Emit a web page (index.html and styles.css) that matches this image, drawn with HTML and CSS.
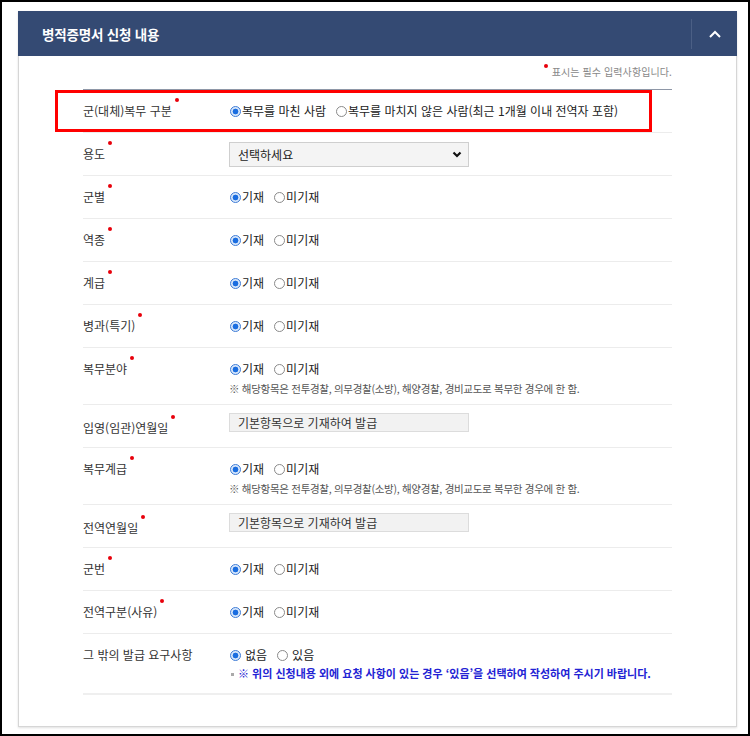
FILE: index.html
```html
<!DOCTYPE html>
<html lang="ko">
<head>
    <meta charset="UTF-8">
    <meta name="viewport" content="width=device-width, initial-scale=1.0">
    <title>병적증명서 신청 내용</title>
    <link rel="stylesheet" href="styles.css">
</head>
<body>
<div class="frame">
    <section class="panel">
        <div class="panel-head">
            <h2>병적증명서 신청 내용</h2>
            <button type="button" class="toggle" aria-label="접기">
                <svg width="12" height="8" viewBox="0 0 12 8"><polyline points="1,7 6,2 11,7" fill="none" stroke="#fff" stroke-width="2"/></svg>
            </button>
        </div>
        <div class="panel-body">
            <p class="req-note"><span class="req"></span>표시는 필수 입력사항입니다.</p>

            <div class="form-table">
                <div class="row highlight">
                    <div class="label">군(대체)복무 구분<span class="req"></span></div>
                    <div class="value">
                        <label class="opt"><input type="radio" name="svc" checked>복무를 마친 사람</label>
                        <label class="opt"><input type="radio" name="svc">복무를 마치지 않은 사람(최근 1개월 이내 전역자 포함)</label>
                    </div>
                </div>

                <div class="row">
                    <div class="label">용도<span class="req"></span></div>
                    <div class="value">
                        <div class="select-wrap">
                            <select class="select">
                                <option>선택하세요</option>
                            </select>
                            <svg class="select-arrow" width="10" height="7" viewBox="0 0 10 7"><polyline points="1.5,1.5 5,5 8.5,1.5" fill="none" stroke="#111" stroke-width="2.2"/></svg>
                        </div>
                    </div>
                </div>

                <div class="row">
                    <div class="label">군별<span class="req"></span></div>
                    <div class="value">
                        <label class="opt"><input type="radio" name="r1" checked>기재</label>
                        <label class="opt"><input type="radio" name="r1">미기재</label>
                    </div>
                </div>

                <div class="row">
                    <div class="label">역종<span class="req"></span></div>
                    <div class="value">
                        <label class="opt"><input type="radio" name="r2" checked>기재</label>
                        <label class="opt"><input type="radio" name="r2">미기재</label>
                    </div>
                </div>

                <div class="row">
                    <div class="label">계급<span class="req"></span></div>
                    <div class="value">
                        <label class="opt"><input type="radio" name="r3" checked>기재</label>
                        <label class="opt"><input type="radio" name="r3">미기재</label>
                    </div>
                </div>

                <div class="row">
                    <div class="label">병과(특기)<span class="req"></span></div>
                    <div class="value">
                        <label class="opt"><input type="radio" name="r4" checked>기재</label>
                        <label class="opt"><input type="radio" name="r4">미기재</label>
                    </div>
                </div>

                <div class="row with-note">
                    <div class="label">복무분야<span class="req"></span></div>
                    <div class="value">
                        <label class="opt"><input type="radio" name="r5" checked>기재</label>
                        <label class="opt"><input type="radio" name="r5">미기재</label>
                        <p class="help">※ 해당항목은 전투경찰, 의무경찰(소방), 해양경찰, 경비교도로 복무한 경우에 한 함.</p>
                    </div>
                </div>

                <div class="row with-input">
                    <div class="label">입영(임관)연월일<span class="req"></span></div>
                    <div class="value">
                        <input type="text" class="ro-input" value="기본항목으로 기재하여 발급" readonly>
                    </div>
                </div>

                <div class="row with-note">
                    <div class="label">복무계급<span class="req"></span></div>
                    <div class="value">
                        <label class="opt"><input type="radio" name="r6" checked>기재</label>
                        <label class="opt"><input type="radio" name="r6">미기재</label>
                        <p class="help">※ 해당항목은 전투경찰, 의무경찰(소방), 해양경찰, 경비교도로 복무한 경우에 한 함.</p>
                    </div>
                </div>

                <div class="row with-input">
                    <div class="label">전역연월일<span class="req"></span></div>
                    <div class="value">
                        <input type="text" class="ro-input" value="기본항목으로 기재하여 발급" readonly>
                    </div>
                </div>

                <div class="row">
                    <div class="label">군번<span class="req"></span></div>
                    <div class="value">
                        <label class="opt"><input type="radio" name="r7" checked>기재</label>
                        <label class="opt"><input type="radio" name="r7">미기재</label>
                    </div>
                </div>

                <div class="row">
                    <div class="label">전역구분(사유)<span class="req"></span></div>
                    <div class="value">
                        <label class="opt"><input type="radio" name="r8" checked>기재</label>
                        <label class="opt"><input type="radio" name="r8">미기재</label>
                    </div>
                </div>

                <div class="row last">
                    <div class="label">그 밖의 발급 요구사항</div>
                    <div class="value">
                        <label class="opt spaced"><input type="radio" name="etc" checked>없음</label>
                        <label class="opt spaced"><input type="radio" name="etc">있음</label>
                        <p class="help blue"><span class="bullet"></span>※ 위의 신청내용 외에 요청 사항이 있는 경우 ‘있음’을 선택하여 작성하여 주시기 바랍니다.</p>
                    </div>
                </div>
            </div>
        </div>
    </section>
</div>
</body>
</html>
```

FILE: styles.css
```css
* {
    box-sizing: border-box;
}

body {
    margin: 0;
    background: #fff;
    font-family: "Noto Sans CJK KR", "Noto Sans", sans-serif;
    font-size: 12px;
    color: #333;
}

.frame {
    width: 750px;
    height: 736px;
    border: 2px solid #000;
    padding: 9px 11px 0 16px;
}

.panel {
    border: 1px solid #d6d6d6;
    box-shadow: 0 1px 2px rgba(0, 0, 0, 0.12);
    background: #fff;
}

.panel-head {
    display: flex;
    align-items: center;
    height: 45px;
    margin: -1px -1px 0 -1px;
    background: #344a73;
    padding-left: 24px;
}

.panel-head h2 {
    flex: 1;
    margin: 0;
    color: #fff;
    font-size: 13.5px;
    font-weight: bold;
    letter-spacing: -0.2px;
}

.toggle {
    display: flex;
    align-items: center;
    justify-content: center;
    width: 46px;
    height: 30px;
    padding: 0;
    border: 0;
    border-left: 1px solid #4b5f85;
    background: none;
    cursor: pointer;
}

.panel-body {
    padding: 8px 64px 31px;
}

.req-note {
    margin: 0 0 9px;
    text-align: right;
    font-size: 10px;
    line-height: 16px;
    letter-spacing: 0.1px;
    color: #888;
}

.req {
    display: inline-block;
    width: 4px;
    height: 4px;
    border-radius: 50%;
    background: #e8000b;
    vertical-align: top;
    margin: -4px 1px 0 3px;
}

.req-note .req {
    margin: 0 4px 0 0;
}

.form-table {
    border-top: 1px solid #8e97a7;
}

.row {
    position: relative;
    display: grid;
    grid-template-columns: 146px 1fr;
    align-items: start;
    padding: 12px 0;
    border-bottom: 1px solid #ececec;
}

.label {
    height: 18px;
    line-height: 18px;
    color: #333;
}

.value {
    display: flex;
    flex-wrap: wrap;
    align-items: center;
    line-height: 18px;
}

.highlight::after {
    content: "";
    position: absolute;
    left: -28px;
    right: 20px;
    top: 0;
    bottom: 0;
    border: 3px solid #f00;
    pointer-events: none;
}

.opt {
    display: flex;
    align-items: center;
    height: 18px;
    margin-right: 9px;
    color: #222;
    cursor: pointer;
}

.opt.spaced input {
    margin-right: 4px;
}

.opt input {
    appearance: none;
    -webkit-appearance: none;
    width: 11px;
    height: 11px;
    margin: 0 1px;
    border: 1px solid #8a8a8a;
    border-radius: 50%;
    background: #fff;
}

.opt input:checked {
    border-color: #3d7bd6;
    background: radial-gradient(circle, #1a6de0 0 2.6px, #d9e8fb 3.2px);
}

.help {
    flex-basis: 100%;
    height: 18px;
    margin: 2px 0 -6px;
    font-size: 10.5px;
    line-height: 18px;
    letter-spacing: -0.3px;
    color: #555;
}

.help.blue {
    margin: 0;
    font-size: 11px;
    font-weight: bold;
    letter-spacing: 0;
    color: #2323d4;
}

.bullet {
    display: inline-block;
    width: 3px;
    height: 3px;
    background: #aaa;
    vertical-align: middle;
    margin: 0 4px 2px 2px;
}

.select-wrap {
    position: relative;
    width: 240px;
    margin: -3px 0 -4px;
}

.select {
    appearance: none;
    -webkit-appearance: none;
    display: block;
    width: 240px;
    height: 25px;
    padding: 0 8px;
    border: 1px solid #cfcfcf;
    background: #f4f4f4;
    font-family: inherit;
    font-size: 12px;
    color: #222;
}

.select-arrow {
    position: absolute;
    right: 7px;
    top: 9px;
    pointer-events: none;
}

.with-input .label {
    margin: 2px 0 -2px;
}

.ro-input {
    display: block;
    width: 240px;
    height: 19px;
    margin: -4px 0 3px;
    padding: 0 8px;
    border: 1px solid #dcdcdc;
    background: #f2f2f2;
    font-family: inherit;
    font-size: 12px;
    color: #333;
    outline: none;
}

.row.last {
    padding-bottom: 11px;
    border-bottom: 2px solid #efefef;
}
```
